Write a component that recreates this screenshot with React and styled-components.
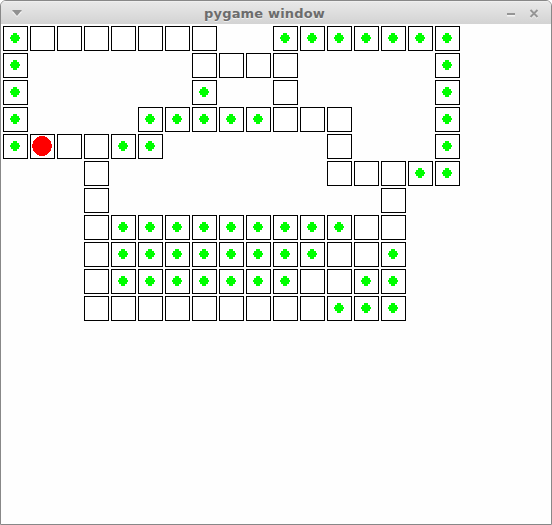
import React from "react";
import styled, { createGlobalStyle } from "styled-components";

const GlobalStyle = createGlobalStyle`
  body { margin: 0; background: #fff; }
`;

const Window = styled.div`
  box-sizing: border-box;
  width: 552px;
  height: 525px;
  border: 1px solid #888;
  border-radius: 6px 6px 0 0;
  background: #fefefe;
  overflow: hidden;
`;

const TitleBar = styled.header`
  box-sizing: border-box;
  height: 23px;
  display: grid;
  grid-template-columns: 37px 1fr 60px;
  align-items: center;
  background: linear-gradient(#e9e9e9, #d3d3d3);
  box-shadow: inset 0 1px #efefef;
`;

const Title = styled.h1`
  margin: 0;
  padding-top: 2px;
  text-align: center;
  font: bold 13px/20px "DejaVu Sans", sans-serif;
  letter-spacing: 0.16px;
  color: #6c6c6c;
  text-shadow: 0 1px #f0f0f0;
  white-space: nowrap;
`;

const Controls = styled.div`
  display: flex;
  height: 23px;
  justify-content: ${(p) => (p.$end ? "flex-end" : "flex-start")};
`;

const Glyph = styled.svg`
  display: block;
  width: ${(p) => p.$width}px;
  height: 23px;
`;

const Board = styled.main`
  display: grid;
  grid-template-columns: repeat(17, 25px);
  grid-auto-rows: 25px;
  gap: 2px;
  padding: 2px;
`;

const Cell = styled.div`
  box-sizing: border-box;
  display: grid;
  place-items: start;
  padding: ${(p) => p.$inset}px;
  border: 1px solid ${(p) => (p.$open ? "#000" : "transparent")};
  background: ${(p) => (p.$open ? "#fff" : "transparent")};
`;

const Disc = styled.svg`
  display: block;
  width: ${(p) => p.$size}px;
  height: ${(p) => p.$size}px;
  fill: ${(p) => p.$color};
  shape-rendering: crispEdges;
`;

// "o" is a pellet, "#" an empty cell, "P" the player.
const MAZE = [
  "o#######  ooooooo",
  "o      ####     o",
  "o      o  #     o",
  "o    ooooo###   o",
  "oP##oo      #   o",
  "   #        ###oo",
  "   #          #  ",
  "   #ooooooooo##  ",
  "   #oooooooo##o  ",
  "   #ooooooo##oo  ",
  "   #########ooo  ",
];

// Pixel width of each scan line of the discs.
const PELLET = [4, 4, 8, 8, 10, 10, 8, 8, 4, 4];
const PLAYER = [6, 10, 12, 14, 16, 18, 18, 18, 20, 20, 20, 20, 18, 18, 18, 16, 14, 12, 10, 6];

function PixelDisc({ rows, color }) {
  const size = rows.length;
  return (
    <Disc $size={size} $color={color} viewBox={`0 0 ${size} ${size}`}>
      {rows.map((w, y) => (
        <rect key={y} x={(size - w) / 2} y={y} width={w} height="1" />
      ))}
    </Disc>
  );
}

export default function App() {
  return (
    <>
      <GlobalStyle />
      <Window>
        <TitleBar>
          <Controls>
            <Glyph $width={30} viewBox="0 0 30 23">
              <path d="M11 11H21L16 16Z" fill="#f3f3f3" />
              <path d="M11 9H21L16 15Z" fill="#919191" />
            </Glyph>
          </Controls>
          <Title>pygame window</Title>
          <Controls $end>
            <Glyph $width={60} viewBox="0 0 60 23">
              <path d="M16 14.5H24M39.5 10L46.5 17M46.5 10L39.5 17" stroke="#f3f3f3" strokeWidth="2" />
              <path d="M16 13H24" stroke="#959595" strokeWidth="2" />
              <path d="M39.5 9L46.5 16M46.5 9L39.5 16" stroke="#959595" strokeWidth="2" />
            </Glyph>
          </Controls>
        </TitleBar>
        <Board>
          {MAZE.flatMap((line, r) =>
            [...line].map((kind, c) => (
              <Cell key={`${r}-${c}`} $open={kind !== " "} $inset={kind === "P" ? 1 : kind === "o" ? 6 : 0}>
                {kind === "o" && <PixelDisc rows={PELLET} color="#0f0" />}
                {kind === "P" && <PixelDisc rows={PLAYER} color="#f00" />}
              </Cell>
            ))
          )}
        </Board>
      </Window>
    </>
  );
}
